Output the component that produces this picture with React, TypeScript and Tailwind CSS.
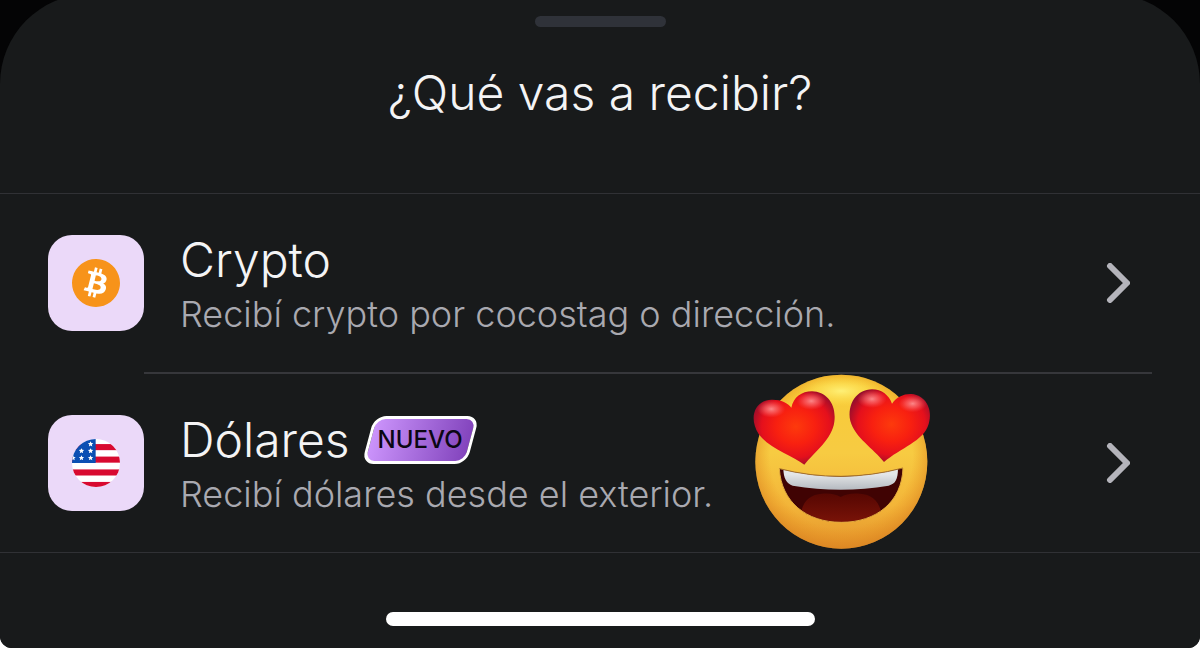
import React from 'react';
import { SiBitcoin } from 'react-icons/si';

const STAR = 'M0 -8 L2.4 -2.9 L8 -2.6 L3.7 1.2 L5 7 L0 4 L-5 7 L-3.7 1.2 L-8 -2.6 L-2.4 -2.9 Z';

const stars = [
  [151, 116],
  [124, 136],
  [151, 136],
  [99, 157],
  [124, 157],
  [151, 157],
];

const UsFlag = () => (
  <svg viewBox="96 101 142 142" className="size-12" aria-hidden="true">
    <clipPath id="flag-round">
      <circle cx="167" cy="172" r="71" />
    </clipPath>
    <g clipPath="url(#flag-round)">
      <rect x="96" y="101" width="142" height="142" fill="#fff" />
      {[116, 153, 191, 228].map((y) => (
        <rect key={y} x="96" y={y} width="142" height="18" fill="#d80a30" />
      ))}
      <rect x="96" y="101" width="70" height="71" fill="#0b4fb3" />
      {stars.map(([x, y]) => (
        <path key={`${x}-${y}`} d={STAR} transform={`translate(${x} ${y})`} fill="#fff" />
      ))}
    </g>
  </svg>
);

const BitcoinCoin = () => (
  <span className="flex size-12 rounded-full bg-[radial-gradient(circle,#fff_60%,transparent_61%)]">
    <SiBitcoin className="size-12 text-[#f7931a]" aria-hidden="true" />
  </span>
);

const Chevron = () => (
  <svg viewBox="0 0 24 40" className="h-10 w-6 shrink-0" fill="none" aria-hidden="true">
    <path d="M4 3 L21 20 L4 37" stroke="#b4b4bb" strokeWidth="6" strokeLinecap="round" strokeLinejoin="round" />
  </svg>
);

const HeartEyes = () => (
  <svg viewBox="0 0 600 570" className="h-[190px] w-[200px]" role="img" aria-label="Cara con ojos de corazón">
    <defs>
      <linearGradient id="face" x1="0" y1="0" x2="0" y2="1">
        <stop offset="0" stopColor="#f8cb36" />
        <stop offset="0.45" stopColor="#f7cb42" />
        <stop offset="0.75" stopColor="#f3b539" />
        <stop offset="1" stopColor="#e3932b" />
      </linearGradient>
      <radialGradient id="rim" cx="0.5" cy="0.47" r="0.53">
        <stop offset="0.78" stopColor="#e88c1c" stopOpacity="0" />
        <stop offset="1" stopColor="#d98120" stopOpacity="0.65" />
      </radialGradient>
      <radialGradient id="shine" cx="0.5" cy="0.5" r="0.5">
        <stop offset="0" stopColor="#fff27a" stopOpacity="0.95" />
        <stop offset="1" stopColor="#ffe14d" stopOpacity="0" />
      </radialGradient>
      <radialGradient id="heart" cx="0.52" cy="0.48" r="0.6">
        <stop offset="0" stopColor="#fd3a0c" />
        <stop offset="0.4" stopColor="#f82010" />
        <stop offset="0.7" stopColor="#e5101c" />
        <stop offset="1" stopColor="#840d30" />
      </radialGradient>
      <radialGradient id="gloss" cx="0.5" cy="0.5" r="0.5">
        <stop offset="0" stopColor="#ff9c9c" stopOpacity="0.85" />
        <stop offset="0.5" stopColor="#ff7a7a" stopOpacity="0.5" />
        <stop offset="1" stopColor="#ff5a5a" stopOpacity="0" />
      </radialGradient>
      <linearGradient id="teeth" x1="0" y1="0" x2="0" y2="1">
        <stop offset="0.3" stopColor="#e4e6e8" />
        <stop offset="1" stopColor="#b5bac0" />
      </linearGradient>
      <linearGradient id="tongue" x1="0" y1="0" x2="0" y2="1">
        <stop offset="0" stopColor="#560702" />
        <stop offset="1" stopColor="#7a1308" />
      </linearGradient>
      <clipPath id="mouth">
        <path d="M118 311 Q302 358 489 309 C486 410 410 472 304 472 C198 472 124 410 118 311 Z" />
      </clipPath>
    </defs>

    <ellipse cx="304" cy="290" rx="258" ry="261" fill="url(#face)" />
    <ellipse cx="304" cy="290" rx="258" ry="261" fill="url(#rim)" />
    <ellipse cx="304" cy="78" rx="130" ry="46" fill="url(#shine)" />

    <g clipPath="url(#mouth)">
      <rect x="110" y="300" width="390" height="180" fill="#400303" />
      <path
        d="M184 474 C176 420 204 388 246 386 C272 384 288 388 302 396 C316 388 334 384 360 386 C402 388 430 420 424 474 Z"
        fill="url(#tongue)"
      />
      <path d="M130 308 Q302 362 474 308 C474 345 466 356 446 362 Q302 386 158 362 C140 356 130 340 130 308 Z" fill="url(#teeth)" />
    </g>
    <path d="M118 311 Q302 358 489 309" fill="none" stroke="#a5702a" strokeWidth="3" />
    <path d="M118 311 C124 410 198 472 304 472 C410 472 486 410 489 309" fill="none" stroke="#e2ab3f" strokeWidth="3" />

    <path
      d="M193 299 C158 272 86 250 56 207 C22 153 50 104 94 104 C122 103 143 113 154 128 C160 97 185 79 216 79 C260 80 290 118 283 170 C277 222 222 262 193 299 Z"
      fill="url(#heart)"
    />
    <ellipse cx="94" cy="132" rx="42" ry="26" fill="url(#gloss)" />
    <ellipse cx="214" cy="108" rx="44" ry="27" fill="url(#gloss)" />
    <path
      d="M432 291 C400 250 345 218 331 168 C320 116 352 73 396 73 C426 73 447 91 456 116 C469 96 492 86 514 87 C556 90 580 132 566 177 C552 228 480 250 432 291 Z"
      fill="url(#heart)"
    />
    <ellipse cx="396" cy="102" rx="44" ry="27" fill="url(#gloss)" />
    <ellipse cx="518" cy="116" rx="42" ry="26" fill="url(#gloss)" />
  </svg>
);

const NewBadge = () => (
  <span className="relative isolate flex h-12 items-center px-4 text-2xl font-medium text-[#0b0713]">
    <span className="absolute inset-x-1.5 inset-y-0 -z-10 -skew-x-15 rounded-xl border-3 border-white bg-linear-to-r from-[#cb93fb] to-[#8344bd]" />
    NUEVO
  </span>
);

type OptionProps = {
  icon: React.ReactNode;
  title: string;
  description: string;
  badge?: React.ReactNode;
};

const Option = ({ icon, title, description, badge }: OptionProps) => (
  <button type="button" className="flex h-[178px] w-full items-center gap-9 pr-[70px] pl-12 text-left">
    <span className="flex size-24 shrink-0 items-center justify-center rounded-3xl bg-[#ebd9f9]">{icon}</span>
    <span className="flex min-w-0 flex-1 flex-col pt-1.5">
      <span className="flex items-center gap-3 text-5xl leading-14 font-light text-[#f4f4f5]">
        {title}
        {badge}
      </span>
      <span className="text-4xl leading-13 font-light text-[#a9a9b0]">{description}</span>
    </span>
    <Chevron />
  </button>
);

const App = () => {
  return (
    <div className="min-h-screen bg-white font-['Inter',sans-serif]">
      <div className="flex min-h-screen flex-col overflow-hidden rounded-b-xl bg-[#040405]">
        <main className="-mt-1.5 flex flex-1 flex-col rounded-t-[90px] bg-[#181a1b]">
          <header className="flex h-[200px] flex-col items-center border-b border-[#303135] pt-[22px]">
            <div className="h-[11px] w-[131px] rounded-full bg-[#2f3239]" />
            <h1 className="mt-8.5 text-5xl leading-16 font-light text-[#f4f4f5]">¿Qué vas a recibir?</h1>
          </header>

          <ul className="border-b border-[#303135]">
            <li>
              <Option icon={<BitcoinCoin />} title="Crypto" description="Recibí crypto por cocostag o dirección." />
            </li>
            <li className="relative">
              <div className="mr-12 ml-36 h-0.5 bg-[#36373b]" />
              <Option
                icon={<UsFlag />}
                title="Dólares"
                description="Recibí dólares desde el exterior."
                badge={<NewBadge />}
              />
              <div className="pointer-events-none absolute -top-[7px] right-[260px]">
                <HeartEyes />
              </div>
            </li>
          </ul>

          <div className="flex flex-1 items-end justify-center pb-[22px]">
            <div className="h-3.5 w-[429px] rounded-full bg-white" />
          </div>
        </main>
      </div>
    </div>
  );
};

export default App;
